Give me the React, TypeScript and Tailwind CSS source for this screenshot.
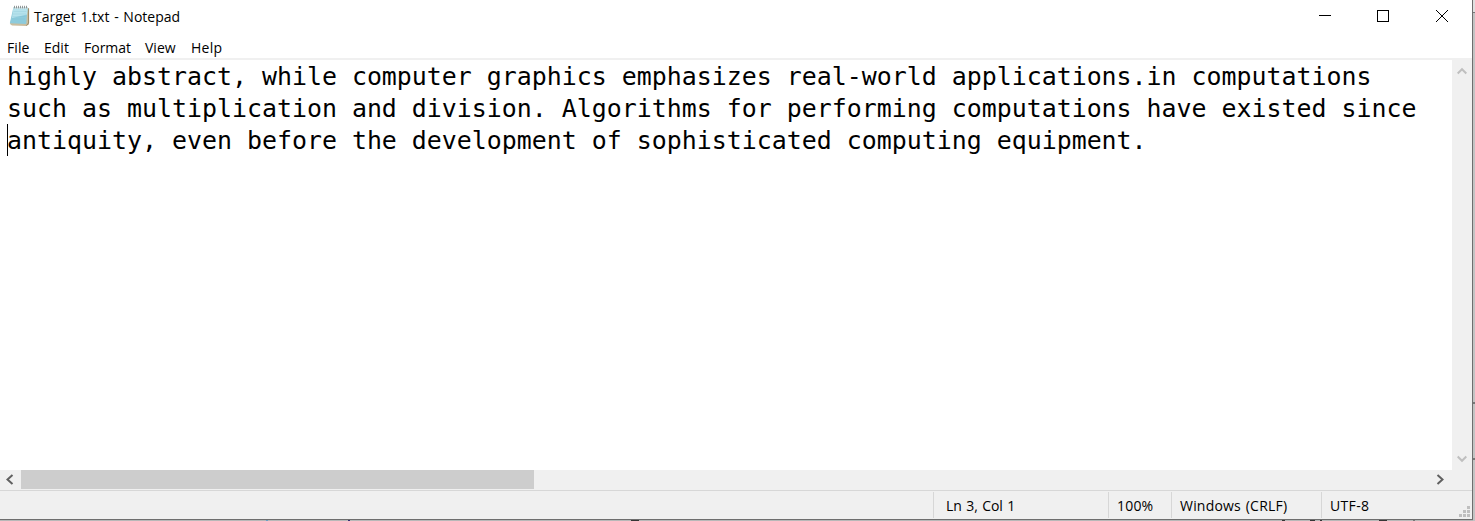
import type { ReactNode } from "react";

const lines = [
  "highly abstract, while computer graphics emphasizes real-world applications.in computations",
  "such as multiplication and division. Algorithms for performing computations have existed since",
  "antiquity, even before the development of sophisticated computing equipment.",
];

function NotepadIcon() {
  return (
    <svg className="ml-[9px] mt-[5px] shrink-0" width="21" height="22" viewBox="0 0 21 22">
      <path d="M5 2.5 20 3v16.5L17.5 21 3 20.5 1 19Z" fill="#c9bd9f" />
      <path d="M17.5 20.5 19.6 18V3.5" fill="none" stroke="#9a8a68" strokeWidth="1" />
      <path d="M4.5 2 18.7 2.5 17.2 19 0.8 18.2Z" fill="#8dcbdc" />
      <path d="M4.5 2 18.7 2.5 18 9.5 3 13Z" fill="#b5e2ec" />
      <path d="M4.4 6.5h13M4 9h13M3.5 11.5h13M3 14h13" stroke="#75b9cd" strokeWidth=".5" opacity=".4" />
      <path d="M4.5 2.8h14" stroke="#d9e2e3" strokeWidth="1.5" />
      <path d="M5.5.8v2.5M7.5.8v2.5M9.5.8v2.5M11.5.8v2.5M13.5.8v2.5M15.5.8v2.5M17.5.8v2.5" stroke="#777f80" strokeWidth=".8" />
    </svg>
  );
}

function Chevron({ className, d, w, h, color }: { className: string; d: string; w: number; h: number; color: string }) {
  return (
    <svg className={className} width={w} height={h} viewBox={`0 0 ${w} ${h}`} fill="none" stroke={color} strokeWidth="2">
      <path d={d} />
    </svg>
  );
}

function Status({ className, children }: { className: string; children: ReactNode }) {
  return (
    <div className={`mt-px h-[26px] shrink-0 border-l border-[#d7d7d7] leading-[27px] ${className}`}>
      <span>{children}</span>
    </div>
  );
}

export default function App() {
  return (
    <div className="flex h-[521px] w-[1475px] overflow-hidden bg-[#c3c3c3] font-['Open_Sans',sans-serif] text-[14px] text-black">
      <div className="flex w-[1473px] flex-col">
        <div className="flex h-[519px] border-r border-[#6e6e6e] bg-white">
          <div className="flex w-[1472px] flex-col">
            <header className="flex h-8 shrink-0 items-start">
              <NotepadIcon />
              <h1 className="ml-1 whitespace-nowrap leading-[33px] [word-spacing:1.1px]">Target 1.txt - Notepad</h1>
              <svg className="ml-auto mr-[23px] mt-[9px]" width="131" height="14" fill="none" stroke="#000" shapeRendering="crispEdges">
                <path d="M1 6.5h12M59.5 1.5h11v11h-11Z" />
                <path d="m118 1 12 12m0-12-12 12" shapeRendering="geometricPrecision" />
              </svg>
            </header>
            <nav className="flex h-[26px] shrink-0 whitespace-nowrap pl-[7px] leading-[31px]">
              <span className="w-[37px] tracking-[0.1px]">File</span>
              <span className="w-10">Edit</span>
              <span className="w-[61px]">Format</span>
              <span className="w-[46px]">View</span>
              <span className="tracking-[0.3px]">Help</span>
            </nav>
            <div className="h-0.5 shrink-0 bg-[#f0f0f0]" />
            <div className="flex h-[410px] shrink-0">
              <main className="w-[1452px] whitespace-pre pl-[7px] pt-px font-['DejaVu_Sans_Mono',monospace] text-[24.925px] leading-8">
                {lines.map((line, i) => (
                  <div key={line} className={i === 2 ? "relative" : ""}>
                    {i === 2 && <span className="absolute left-0 top-[-1px] h-8 w-px bg-black" />}
                    {line}
                  </div>
                ))}
              </main>
              <div className="-mt-0.5 flex w-5 flex-col items-center justify-between bg-[#f0f0f0] pb-[7px] pt-[9px]">
                <Chevron className="" w={10} h={8} d="m.7 6.5 4.3-4.3 4.3 4.3" color="#bfbfbf" />
                <Chevron className="" w={10} h={8} d="m.7 1.5 4.3 4.3 4.3-4.3" color="#bfbfbf" />
              </div>
            </div>
            <div className="flex h-5 shrink-0 bg-[#f0f0f0]">
              <Chevron className="ml-[5px] mt-[4px]" w={9} h={11} d="M7.5 1 2.5 5.5l5 4.5" color="#606060" />
              <div className="ml-[7px] h-[19px] w-[513px] bg-[#cdcdcd]" />
              <Chevron className="ml-auto mr-[27px] mt-[4px]" w={9} h={11} d="m1.5 1 5 4.5-5 4.5" color="#606060" />
            </div>
            <footer className="flex h-[29px] shrink-0 whitespace-nowrap border-t border-[#d7d7d7] bg-[#f0f0f0] pl-[933px]">
              <Status className="w-[175px] pl-3 tracking-[-0.1px] [word-spacing:1px]">Ln 3, Col 1</Status>
              <Status className="w-[63px] pl-2 tracking-[0.2px]">100%</Status>
              <Status className="w-[150px] pl-2 tracking-[0.2px] [word-spacing:1px]">Windows (CRLF)</Status>
              <Status className="w-[137px] pl-2 tracking-[0.35px]">UTF-8</Status>
              <svg className="mt-[15px] shrink-0" width="12" height="12" fill="#bfbfbf">
                <path d="M9 0h3v3H9ZM5 4h3v3H5ZM9 4h3v3H9ZM1 8h3v3H1ZM5 8h3v3H5ZM9 8h3v3H9Z" />
              </svg>
            </footer>
          </div>
        </div>
        <svg width="1473" height="2" shapeRendering="crispEdges">
          <path d="M0 .5h1473" stroke="#6e6e6e" />
          <path d="M0 1.5h1473" stroke="#b8b8b8" />
          <path d="M266 1.5h2" stroke="#6c9fc7" />
          <path d="M348 1.5h2" stroke="#362f78" />
          <path d="M631 1.5h8M1282 1.5h3M1310 1.5h5M1320 1.5h2M1379 1.5h8" stroke="#353535" />
          <path d="M1413 1.5h2" stroke="#777" />
        </svg>
      </div>
      <svg width="2" height="521" shapeRendering="crispEdges">
        <path d="M0 0h2v12H0z" fill="#e0e0e0" />
        <path d="M0 12.5h2M0 403h2M0 459h2" stroke="#777" strokeWidth="1.5" />
      </svg>
    </div>
  );
}
